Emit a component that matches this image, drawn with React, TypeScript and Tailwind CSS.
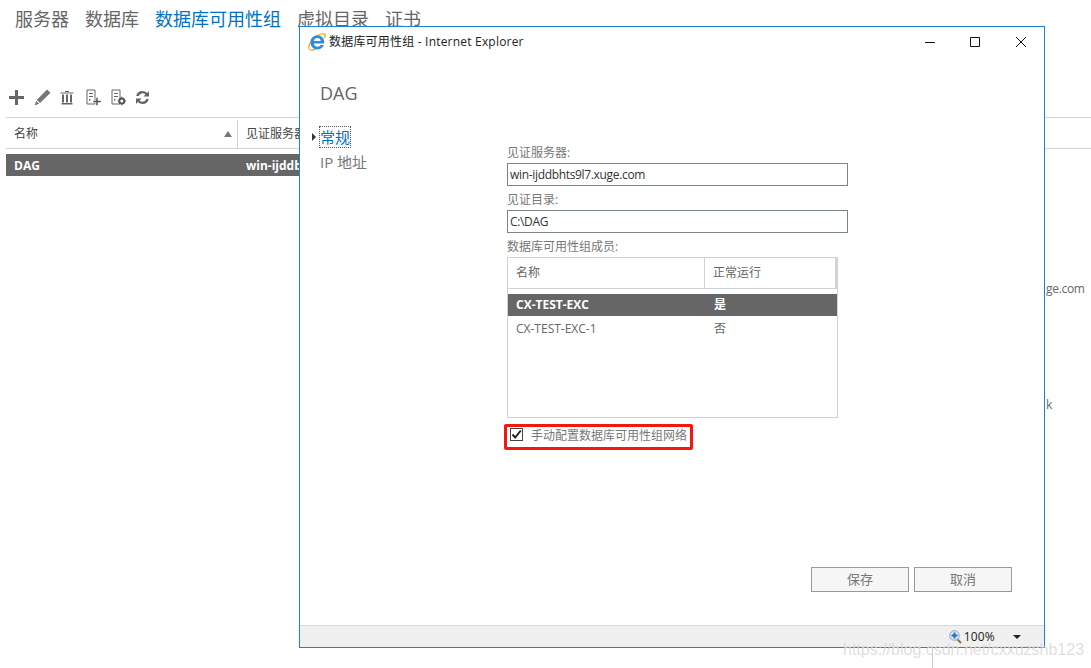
const font = "font-['Open_Sans','Noto_Sans_CJK_SC',sans-serif]";

const tabs = [
  { label: "服务器" },
  { label: "数据库" },
  { label: "数据库可用性组", active: true },
  { label: "虚拟目录" },
  { label: "证书" },
];

const IeLogo = () => (
  <svg width="18" height="18" viewBox="0 0 18 18" fill="none">
    <path d="M1.200 16C-.5 13 3.500 6 8.500 3c4-2.400 8.300-3 8.800-1.200.300 1.200-.6 2.600-1.300 3.500" stroke="#f0b429" strokeWidth="1.400" />
    <path d="M1.500 16.300c1.200 1.200 4 .7 6-.3" stroke="#f0b429" strokeWidth="1.400" />
    <path d="M9.500 2.300c3.800 0 6.700 3 6.700 6.900v1.300H5.800c.2 2 1.700 3.200 3.700 3.200 1.400 0 2.500-.6 3.200-1.600h3.200c-1.100 2.700-3.500 4.300-6.400 4.300-4 0-7-3-7-7 0-4.200 3-7.100 7-7.100zM5.900 7.900h6.900c-.2-1.700-1.600-2.900-3.400-2.900s-3.200 1.200-3.500 2.900z" fill="#2b8fdb" fillRule="evenodd" />
  </svg>
);

const ToolbarIcons = () => (
  <div className="flex items-center h-5 pl-[8px]">
    <svg width="17" height="17" viewBox="0 0 17 17" className="mr-[9px]">
      <path d="M7 1h3v6h6v3h-6v6H7v-6H1V7h6z" fill="#666" />
    </svg>
    <svg width="17" height="17" viewBox="0 0 17 17" className="mr-[9px]">
      <path d="M13 .5l3.500 3.200L6 14 2.800 11zM2.200 12l3 2.800L.5 16.500z" fill="#777" />
    </svg>
    <svg width="14" height="15" viewBox="0 0 14 15" className="mr-[12px]">
      <path d="M0.500 2.500h13v1h-13zM5 1h4v1H5zM1.500 13h11v1.500h-11zM2 4.500h2v8H2zM6 4.500h2v8H6zM10 4.500h2v8h-2z" fill="#666" />
    </svg>
    <svg width="15" height="17" viewBox="0 0 15 17" className="mr-[10px]">
      <path d="M1 1h8v14H1z" fill="none" stroke="#666" />
      <path d="M3 4h4v1H3zM3 7h4v1H3zM3 10h1.500v1.500H3z" fill="#666" />
      <path d="M10 8.500h2v3h3v2h-3v3h-2v-3H7v-2h3z" fill="#555" stroke="#fff" strokeWidth=".5" />
    </svg>
    <svg width="15" height="17" viewBox="0 0 15 17" className="mr-[9px]">
      <path d="M1 1h8v14H1z" fill="none" stroke="#666" />
      <path d="M3 4h4v1H3zM3 7h4v1H3zM3 10h1.500v1.500H3z" fill="#666" />
      <circle cx="10.800" cy="12" r="2.500" fill="#fff" stroke="#555" strokeWidth="2" />
      <path d="M10.200 7.800h1.200v1.500h-1.200zM10.200 14.700h1.200v1.500h-1.200zM6.600 11.400h1.500v1.200H6.600zM13.500 11.400H15v1.200h-1.500z" fill="#555" />
    </svg>
    <svg width="15" height="15" viewBox="0 0 15 15">
      <path d="M7.500 1a6.500 6.500 0 0 1 4.600 1.900L14 1v5.500H8.500l1.900-1.900A4 4 0 0 0 3.700 6H1.200A6.500 6.500 0 0 1 7.500 1z" fill="#666" />
      <path d="M7.500 14a6.500 6.500 0 0 1-4.600-1.900L1 14V8.500h5.500l-1.900 1.900A4 4 0 0 0 11.300 9h2.500a6.500 6.500 0 0 1-6.300 5z" fill="#666" />
    </svg>
  </div>
);

const Field = ({ label, value }: { label: string; value: string }) => (
  <div>
    <div className="text-[12px] leading-[18px] h-[16px] text-[#777]">{label}</div>
    <div className="mt-[3px] w-[341px] h-[23px] border border-[#7b8585] px-[2px] text-[12px] leading-[21px] tracking-[-0.33px] text-[#333]">
      {value}
    </div>
  </div>
);

const App = () => {
  return (
    <div className={`relative w-[1091px] h-[668px] overflow-hidden bg-white ${font}`}>
      <nav className="flex gap-4 pl-[15px] pt-[7px] text-[18px] leading-[24px] text-[#666]">
        {tabs.map((t) => (
          <span key={t.label} className={t.active ? "text-[#0072c6]" : ""}>
            {t.label}
          </span>
        ))}
      </nav>

      <div className="mt-[56px]">
        <ToolbarIcons />
      </div>

      <div className="mt-[10px] ml-[6px]">
        <div className="flex h-[32px] items-center border-y border-[#cfd3d6] pt-[2px] text-[12px] leading-[16px] text-[#444]">
          <div className="flex w-[232px] h-full items-center justify-between border-r border-[#cfd3d6] pl-2 pr-[5px]">
            <span>名称</span>
            <span className="w-0 h-0 border-x-[4px] border-x-transparent border-b-[6px] border-b-[#777]" />
          </div>
          <div className="w-[61px] overflow-hidden whitespace-nowrap pl-2">见证服务器</div>
        </div>
        <div className="mt-[5px] flex h-[22px] w-[293px] items-center overflow-hidden whitespace-nowrap bg-[#666] pt-[2px] text-[12px] font-bold text-white">
          <div className="w-[240px] shrink-0 pl-2">DAG</div>
          <div className="w-[53px] shrink-0 overflow-hidden">win-ijddbhts9l7.xuge.com</div>
        </div>
      </div>

      <div className="absolute left-[1046px] top-[281px] text-[12px] leading-[16px] tracking-[-0.3px] text-[#666]">ge.com</div>
      <div className="absolute left-[1046px] top-[397px] text-[12px] leading-[16px] text-[#666]">k</div>
      <div className="absolute left-[932px] top-[648px] h-[20px] w-px bg-[#c8c8c8]" />

      {/* IE window */}
      <div className="absolute left-[299px] top-[26px] flex h-[622px] w-[746px] flex-col border border-[#1883d7] bg-white">
        <div className="flex h-[30px] items-center pl-[8px]">
          <IeLogo />
          <span className="ml-[3px] text-[12px] tracking-[0.2px] text-[#222]">数据库可用性组 - Internet Explorer</span>
          <div className="ml-auto flex items-center">
            <svg width="12" height="12" viewBox="0 0 12 12" className="mr-[33px]">
              <path d="M1 6.500h10" stroke="#111" />
            </svg>
            <svg width="12" height="12" viewBox="0 0 12 12" className="mr-[34px]">
              <path d="M1.500 1.500h9v9h-9z" fill="none" stroke="#111" />
            </svg>
            <svg width="12" height="12" viewBox="0 0 12 12" className="mr-[17px]">
              <path d="M1 1l10 10M11 1L1 11" stroke="#111" />
            </svg>
          </div>
        </div>

        <div className="flex flex-1">
          <div className="w-[207px] shrink-0 pl-[20px]">
            <div className="mt-[24px] text-[18px] leading-[24px] text-[#666]">DAG</div>
            <div className="relative mt-[22px] w-fit text-[15px] leading-[20px] text-[#0072c6]">
              <span className="absolute left-[-8px] top-[6px] h-0 w-0 border-y-[4px] border-l-[4px] border-y-transparent border-l-[#333]" />
              <span className="block outline-1 outline-dotted outline-[#555]">常规</span>
            </div>
            <div className="mt-[5px] text-[15px] leading-[20px] text-[#777]">IP 地址</div>
          </div>

          <div className="flex flex-1 flex-col">
            <div className="mt-[87px] flex flex-col gap-[5px]">
              <Field label="见证服务器:" value="win-ijddbhts9l7.xuge.com" />
              <Field label="见证目录:" value="C:\DAG" />
            </div>
            <div className="mt-[5px] text-[12px] leading-[18px] h-[16px] text-[#777]">数据库可用性组成员:</div>
            <div className="mt-[3px] h-[161px] w-[331px] border border-[#cfd3d6] text-[12px] text-[#666]">
              <div className="flex h-[31px] items-center border-b border-[#cfd3d6]">
                <div className="flex h-full w-[197px] items-center border-r border-[#cfd3d6] pl-2">名称</div>
                <div className="flex h-full flex-1 items-center border-r-2 border-[#cfd3d6] pl-2">正常运行</div>
              </div>
              <div className="mt-[5px] flex h-[22px] items-center bg-[#666] font-bold text-white">
                <div className="w-[206px] pl-2">CX-TEST-EXC</div>
                <div>是</div>
              </div>
              <div className="flex h-[22px] items-center pt-1">
                <div className="w-[206px] pl-2">CX-TEST-EXC-1</div>
                <div>否</div>
              </div>
            </div>
            <div className="ml-[-3px] mt-[6px] flex h-[26px] w-[189px] items-center rounded-[2px] border-[3px] border-[#f5170d] pl-[3px] text-[12px] text-[#777]">
              <span className="mb-[5px] flex h-[13px] w-[13px] items-center justify-center border border-[#444]">
                <svg width="11" height="11" viewBox="0 0 11 11">
                  <path d="M1.500 5.500l2.700 3L9.800 1.500" fill="none" stroke="#222" strokeWidth="2" />
                </svg>
              </span>
              <span className="ml-[8px] mb-[2px]">手动配置数据库可用性组网络</span>
            </div>
            <div className="ml-[304px] mt-[117px] flex gap-[5px] text-[13px] text-[#777]">
              <div className="flex h-[25px] w-[98px] items-center justify-center border border-[#929c9c] bg-[#f6f6f6]">保存</div>
              <div className="flex h-[25px] w-[98px] items-center justify-center border border-[#929c9c] bg-[#f6f6f6]">取消</div>
            </div>
          </div>
        </div>

        <div className="flex h-[22px] items-center border-t border-[#d9d9d9] bg-[#f0f0f0]">
          <div className="ml-auto flex items-center">
            <svg width="13" height="14" viewBox="0 0 13 14">
              <path d="M8 9l4 4" stroke="#9a6a3a" strokeWidth="2" />
              <circle cx="5.500" cy="5.500" r="4.800" fill="#dcebf7" stroke="#8aa3b8" />
              <path d="M4.500 2.500h2v2h2v2h-2v2h-2v-2h-2v-2h2z" fill="#1c6fc4" />
            </svg>
            <span className="ml-[2px] text-[12px] leading-[12px] tracking-[0.2px] text-[#222]">100%</span>
            <span className="ml-[18px] mr-[23px] h-0 w-0 border-x-[4px] border-t-[4px] border-x-transparent border-t-[#222]" />
          </div>
        </div>
      </div>

      <div className="absolute left-[843px] top-[642px] font-['Liberation_Sans',sans-serif] text-[16px] leading-[16px] text-[#d9d9d9]/85">
        https://blog.csdn.net/cxxuzshb123
      </div>
    </div>
  );
};

export default App;
